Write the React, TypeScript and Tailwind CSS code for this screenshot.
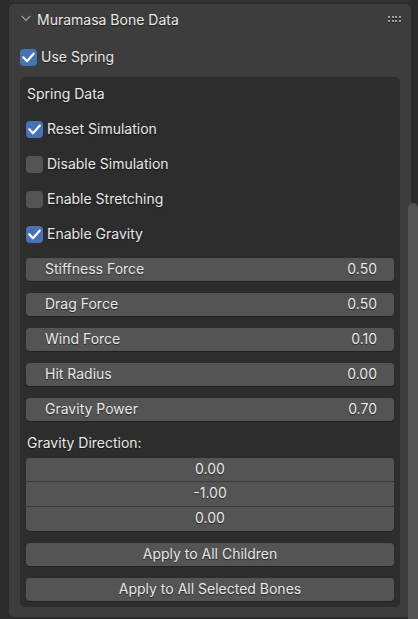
import React from "react";

const txt = "text-[#e8e8e8] leading-[20px] relative top-[-1px] [text-shadow:0_1px_1px_rgba(0,0,0,0.55)]";

function Check({ checked }: { checked: boolean }) {
  return (
    <div
      className={
        "w-[17px] h-[17px] rounded-[4px] flex items-center justify-center shrink-0 " +
        (checked ? "bg-[#4772b3]" : "bg-[#545454]")
      }
    >
      {checked && (
        <svg width="17" height="17" viewBox="0 0 17 17">
          <polyline
            points="3.3,8.3 7,12.2 13.8,4.6"
            fill="none"
            stroke="#ffffff"
            strokeWidth="2.2"
            strokeLinecap="round"
            strokeLinejoin="round"
          />
        </svg>
      )}
    </div>
  );
}

function CheckRow({ label, checked }: { label: string; checked: boolean }) {
  return (
    <div className="h-[35px] flex items-center pl-[6px] gap-[4px]">
      <Check checked={checked} />
      <span className={txt}>{label}</span>
    </div>
  );
}

function Field({ label, value }: { label: string; value: string }) {
  return (
    <div className="h-[23px] rounded-[4px] bg-[#545454] flex items-center justify-between pl-[19px] pr-[17px] shadow-[0_1px_0_rgba(0,0,0,0.25)]">
      <span className={txt}>{label}</span>
      <span className={txt}>{value}</span>
    </div>
  );
}

function Button({ label }: { label: string }) {
  return (
    <div className="h-[23px] rounded-[4px] bg-[#545454] flex items-center justify-center shadow-[0_1px_0_rgba(0,0,0,0.25)]">
      <span className={txt}>{label}</span>
    </div>
  );
}

export default function App() {
  return (
    <div className="w-[418px] h-[619px] bg-[#2b2b2b] relative overflow-hidden font-['Inter',sans-serif] text-[14px]">
      <div className="h-[2px] mx-[9px] w-[402px] bg-[#333333] rounded-b-[3px]" />
      <div className="h-[2px]" />
      <div className="ml-[9px] w-[402px] h-[613px] rounded-[5px] bg-[#3d3d3d] flex flex-col">
        {/* header */}
        <div className="h-[31px] flex items-center relative">
          <svg className="absolute left-[12px] top-[11px]" width="10" height="7" viewBox="0 0 10 7">
            <polyline points="0.7,0.8 5,5.4 9.3,0.8" fill="none" stroke="#a8a8a8" strokeWidth="1.1" />
          </svg>
          <span className="ml-[28px] text-[#e8e8e8] leading-[20px] [text-shadow:0_1px_1px_rgba(0,0,0,0.55)]">Muramasa Bone Data</span>
          <div className="absolute left-[379px] top-[12px] grid grid-cols-4 gap-x-[1.5px] gap-y-[1.5px]">
            {Array.from({ length: 8 }).map((_, i) => (
              <div key={i} className="w-[2px] h-[2px] bg-[#a0a0a0] shadow-[0_1px_0_#1e1e1e]" />
            ))}
          </div>
        </div>
        {/* use spring */}
        <div className="mt-[14px] h-[17px] flex items-center pl-[11px] gap-[4px]">
          <Check checked={true} />
          <span className={txt}>Use Spring</span>
        </div>
        {/* box */}
        <div className="mt-[11px] mx-[11px] w-[380px] h-[530px] rounded-[5px] bg-[#2d2d2d] flex flex-col">
          <div className="h-[35px] flex items-center pl-[7px]">
            <span className={txt}>Spring Data</span>
          </div>
          <CheckRow label="Reset Simulation" checked={true} />
          <CheckRow label="Disable Simulation" checked={false} />
          <CheckRow label="Enable Stretching" checked={false} />
          <CheckRow label="Enable Gravity" checked={true} />
          <div className="mt-[6px] mx-[6px] flex flex-col gap-[12px]">
            <Field label="Stiffness Force" value="0.50" />
            <Field label="Drag Force" value="0.50" />
            <Field label="Wind Force" value="0.10" />
            <Field label="Hit Radius" value="0.00" />
            <Field label="Gravity Power" value="0.70" />
          </div>
          <div className="mt-[13px] h-[20px] flex items-center pl-[7px]">
            <span className={txt}>Gravity Direction:</span>
          </div>
          <div className="mt-[4px] mx-[6px] rounded-[4px] overflow-hidden bg-[#3a3a3a] flex flex-col gap-px shadow-[0_1px_0_rgba(0,0,0,0.25)]">
            <div className="h-[23px] bg-[#545454] flex items-center justify-center">
              <span className={txt}>0.00</span>
            </div>
            <div className="h-[24px] bg-[#545454] flex items-center justify-center">
              <span className={txt}>-1.00</span>
            </div>
            <div className="h-[24px] bg-[#545454] flex items-center justify-center">
              <span className={txt}>0.00</span>
            </div>
          </div>
          <div className="mt-[12px] mx-[6px] flex flex-col gap-[12px]">
            <Button label="Apply to All Children" />
            <Button label="Apply to All Selected Bones" />
          </div>
        </div>
      </div>
      {/* scrollbar */}
      <div className="absolute right-0 top-[203px] bottom-0 w-[10px] rounded-t-[5px] bg-[#545454]" />
    </div>
  );
}
